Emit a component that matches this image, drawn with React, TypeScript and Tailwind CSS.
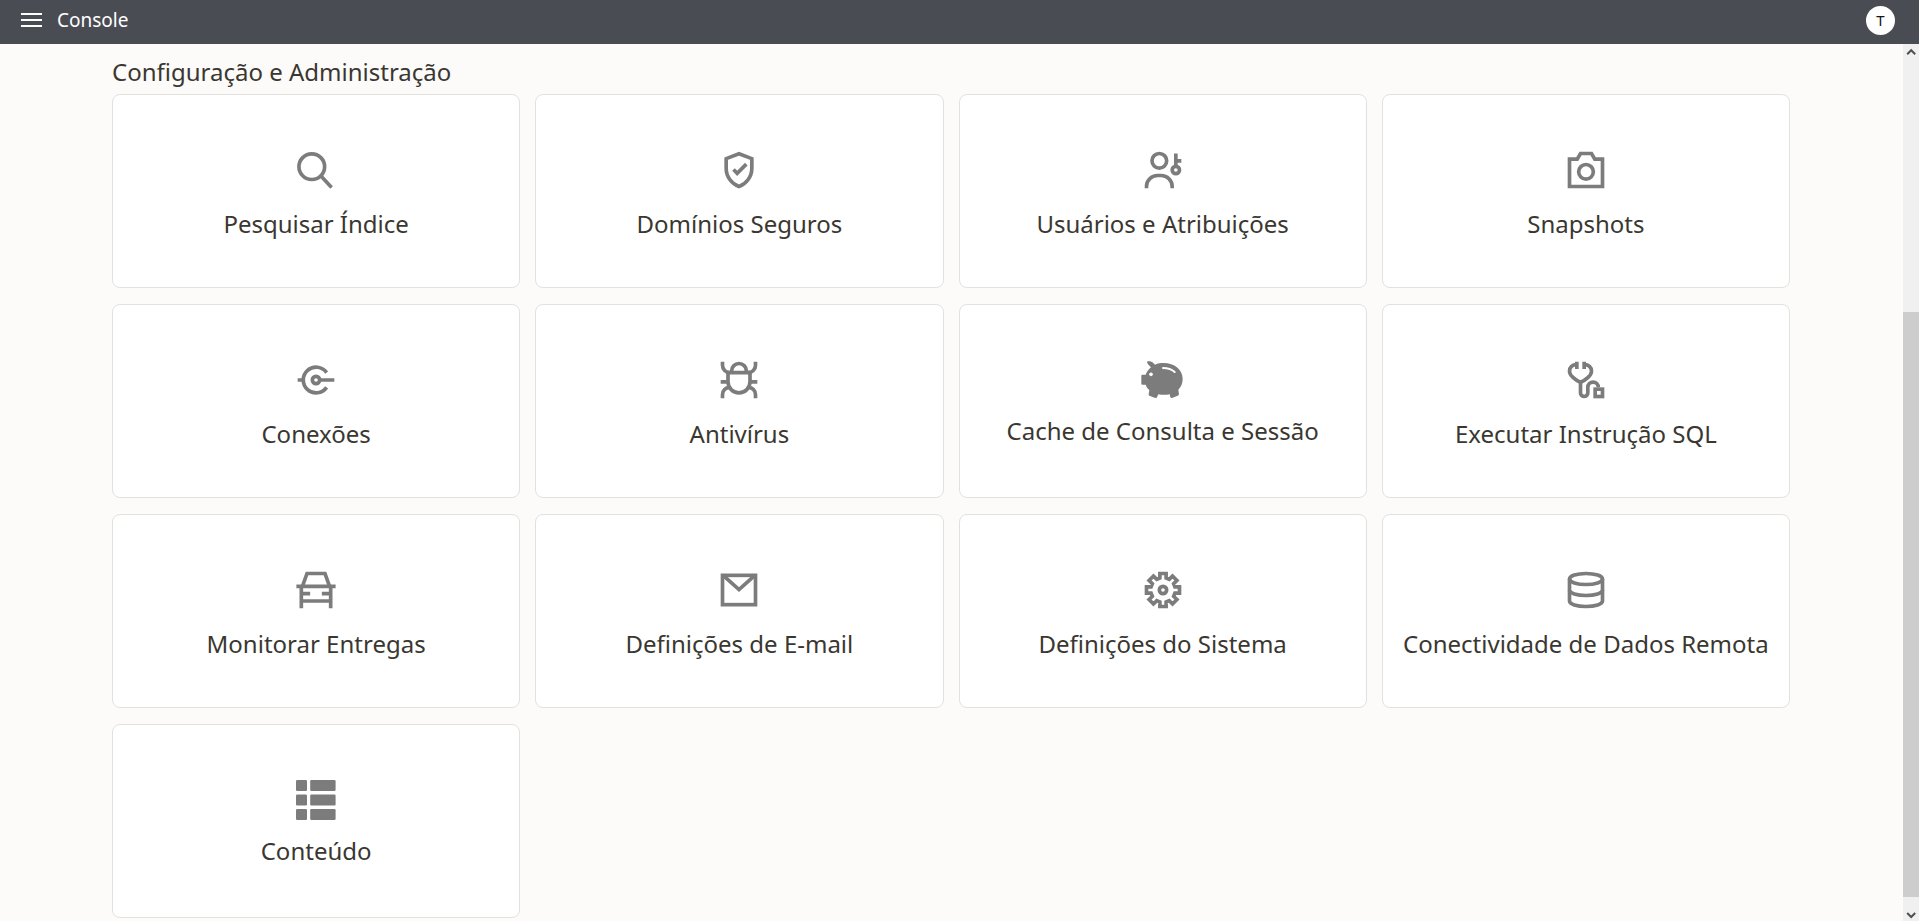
import type { ReactNode } from "react";

type Tile = { label: string; icon: ReactNode; compact?: boolean };

function LineIcon({ children }: { children: ReactNode }) {
  return (
    <svg
      viewBox="0 0 24 24"
      className="size-11 shrink-0"
      fill="none"
      stroke="currentColor"
      strokeWidth="2"
      aria-hidden="true"
    >
      {children}
    </svg>
  );
}

const tiles: Tile[] = [
  {
    label: "Pesquisar Índice",
    icon: (
      <LineIcon>
        <circle cx="9.7" cy="10.2" r="7" />
        <path d="M14.6 15.2l5.9 6.3" />
      </LineIcon>
    ),
  },
  {
    label: "Domínios Seguros",
    icon: (
      <LineIcon>
        <path d="M12 3.1l7 2.7V11c0 4.8-3.2 8.7-7 10-3.8-1.3-7-5.2-7-10V5.8z" />
        <path d="M9 11.7l2 2.1 5-5" />
      </LineIcon>
    ),
  },
  {
    label: "Usuários e Atribuições",
    icon: (
      <LineIcon>
        <circle cx="10" cy="7" r="4" />
        <path d="M3 22v-1a6 6 0 016-6h2a6 6 0 016 6v1" />
        <circle cx="19" cy="12" r="2" />
        <path d="M19 3v7M19 7h3" />
      </LineIcon>
    ),
  },
  {
    label: "Snapshots",
    icon: (
      <LineIcon>
        <path d="M3 6.1h4.2L9 3h6l1.8 3.1H21V21H3z" />
        <circle cx="12" cy="13" r="4" />
      </LineIcon>
    ),
  },
  {
    label: "Conexões",
    icon: (
      <LineIcon>
        <path d="M17.8 8a7 7 0 100 8M2 12h3M14 12h8" />
        <circle cx="12" cy="12" r="2" />
      </LineIcon>
    ),
  },
  {
    label: "Antivírus",
    icon: (
      <LineIcon>
        <path d="M6 8h12v5a6 6 0 01-12 0z" />
        <path d="M8 8V7a4 4 0 018 0v1" />
        <path d="M3 2v2a4 4 0 004 4M21 2v2a4 4 0 01-4 4M2 13h4M18 13h4" />
        <path d="M3 22v-2a4 4 0 013.8-4M21 22v-2a4 4 0 00-3.8-4" />
      </LineIcon>
    ),
  },
  {
    label: "Cache de Consulta e Sessão",
    compact: true,
    icon: (
      <svg viewBox="0 0 132 132" className="size-11 shrink-0" aria-hidden="true">
        <path
          fill="currentColor"
          d="M20 10C26 9 33 11 36 14L42 20C50 16 60 15 68 15C100 15 125 35 125 62C125 77 120 86 112 95L114 109Q114 112 110 113L93 120Q89 121 88 117L86 109Q69 112 52 109L48 118Q47 121 43 120L25 113Q22 112 23 109L25 96C20 92 16 86 14 80H4Q1 80 1 77V53Q1 50 4 50H14C17 43 22 34 30 28L26 24C22 20 19 16 18 12Z"
        />
        <circle cx="30" cy="49" r="5.5" fill="#fff" />
        <path d="M66 30Q88 30 101 42" fill="none" stroke="#fff" strokeWidth="6" strokeLinecap="round" />
      </svg>
    ),
  },
  {
    label: "Executar Instrução SQL",
    icon: (
      <LineIcon>
        <path d="M7 2v4M11 2v4" />
        <path d="M7 3.6C4.5 3.6 3 5 3 7.2c0 2.2 3 4.8 6 6 3-1.2 6-3.8 6-6 0-2.2-1.5-3.6-4-3.6" />
        <path d="M9 13v6a2 2 0 004 0v-3a2.8 2.8 0 015.7 0" />
        <rect x="17" y="17" width="4" height="4" />
      </LineIcon>
    ),
  },
  {
    label: "Monitorar Entregas",
    icon: (
      <LineIcon>
        <path d="M1.3 10h21.4M4 10v12M20 10v12M4 18h16" />
        <path d="M4.6 10L7.1 3h9.8l2.5 7M4 14h4.8M20 14h-4.8" />
      </LineIcon>
    ),
  },
  {
    label: "Definições de E-mail",
    icon: (
      <LineIcon>
        <rect x="3" y="4" width="18" height="16" />
        <path d="M3.5 4.2l8.5 7.6 8.5-7.6" />
      </LineIcon>
    ),
  },
  {
    label: "Definições do Sistema",
    icon: (
      <LineIcon>
        <path d="M10.3 5.5V3h3.4v2.5l1.7.7 1.8-1.8 2.4 2.4-1.8 1.8.7 1.7H21v3.4h-2.5l-.7 1.7 1.8 1.8-2.4 2.4-1.8-1.8-1.7.7V21h-3.4v-2.5l-1.7-.7-1.8 1.8-2.4-2.4 1.8-1.8-.7-1.7H3v-3.4h2.5l.7-1.7-1.8-1.8 2.4-2.4 1.8 1.8z" />
        <circle cx="12" cy="12" r="2" />
      </LineIcon>
    ),
  },
  {
    label: "Conectividade de Dados Remota",
    icon: (
      <LineIcon>
        <ellipse cx="12" cy="6" rx="9" ry="3" />
        <path d="M3 6v12c0 1.7 4 3 9 3s9-1.3 9-3V6" />
        <path d="M3 12c0 1.7 4 3 9 3s9-1.3 9-3" />
      </LineIcon>
    ),
  },
  {
    label: "Conteúdo",
    compact: true,
    icon: (
      <svg viewBox="0 0 44 44" className="size-11 shrink-0" fill="currentColor" aria-hidden="true">
        {[2, 16.5, 31].map((y) => (
          <g key={y}>
            <rect x="2" y={y} width="11" height="11" rx="1.2" />
            <rect x="16.2" y={y} width="25.4" height="11" rx="1.2" />
          </g>
        ))}
      </svg>
    ),
  },
];

function Header() {
  return (
    <header className="flex h-11 shrink-0 items-center bg-[#4a4c54] pr-6 pb-1 pl-5 text-white">
      <button type="button" aria-label="Menu" className="flex h-10 items-center">
        <svg viewBox="0 0 22 14" className="h-3.5 w-[22px]" fill="currentColor" aria-hidden="true">
          <path d="M1 0h21v2H1zM1 6h21v2H1zM1 12h21v2H1z" />
        </svg>
      </button>
      <h1 className="ml-[15px] text-[19px] leading-6">Console</h1>
      <button
        type="button"
        aria-label="Conta de T"
        className="ml-auto flex size-[29px] items-center justify-center rounded-full bg-white text-[15px] text-[#161513]"
      >
        T
      </button>
    </header>
  );
}

function TileCard({ label, icon, compact }: Tile) {
  return (
    <li>
      <a
        href="#"
        className={
          "flex h-[194px] flex-col items-center rounded-lg border border-[#e2e1de] bg-white pt-[53px] text-[#7c7c7c] " +
          (compact ? "gap-[13px]" : "gap-4")
        }
      >
        {icon}
        <span className="text-2xl whitespace-nowrap text-[#3a3731]">{label}</span>
      </a>
    </li>
  );
}

function ScrollRail() {
  return (
    <div className="flex w-4 shrink-0 flex-col bg-[#f0f0f0] text-[#505050]" aria-hidden="true">
      <svg viewBox="0 0 16 16" className="size-4" fill="none" stroke="currentColor" strokeWidth="2">
        <path d="M4.2 10.2L8.2 6.2l4 4" />
      </svg>
      <div className="grow-[252]" />
      <div className="grow-[584] bg-[#cdcdcd]" />
      <div className="grow-[8]" />
      <svg viewBox="0 0 16 16" className="size-4" fill="none" stroke="currentColor" strokeWidth="2">
        <path d="M4.2 8L8.2 12l4-4" />
      </svg>
    </div>
  );
}

export default function App() {
  return (
    <div className="flex h-screen flex-col bg-[#fcfbfa] font-['Noto_Sans','Open_Sans',sans-serif]">
      <Header />
      <div className="flex min-h-0 grow">
        <main className="min-w-0 grow overflow-y-auto pt-3 pr-[113px] pl-28 [scrollbar-width:none]">
          <h2 className="mb-1.5 text-2xl text-[#3a3731]">Configuração e Administração</h2>
          <ul className="grid grid-cols-4 gap-x-[15px] gap-y-4">
            {tiles.map((tile) => (
              <TileCard key={tile.label} {...tile} />
            ))}
          </ul>
        </main>
        <ScrollRail />
      </div>
    </div>
  );
}
